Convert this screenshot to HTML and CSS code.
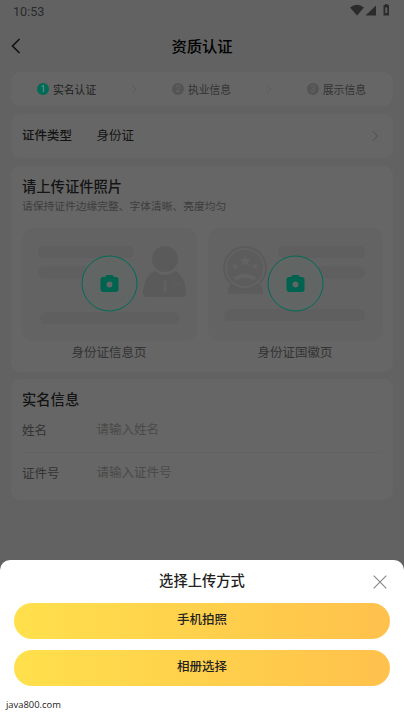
FILE: index.html
```html
<!DOCTYPE html>
<html lang="zh-CN">
<head>
<meta charset="utf-8">
<title>资质认证</title>
<link rel="stylesheet" href="styles.css">
</head>
<body>
<div class="screen">
  <header class="status">
    <span>10:53</span>
    <svg width="42" height="14" viewBox="0 0 42 14" fill="#2b2b2b"><path d="M0 3.500Q7-1.800 14 3.500L7 11.500Z"/><path d="M26 1.500V11.500H15.500Z"/><path fill-rule="evenodd" d="M34 1h1V0h2.500v1h1.500V11.500H33.500V1ZM35.300 3.500v5.500h1.900V3.500Z"/></svg>
  </header>
  <nav class="navbar">
    <svg class="back" width="12" height="18" viewBox="0 0 12 18"><path d="M8.500 2L1.500 9l7 7" fill="none" stroke="#111" stroke-width="1.600"/></svg>
    <h1>资质认证</h1>
  </nav>
  <main>
    <section class="card steps">
      <div class="step active"><i>1</i><span>实名认证</span></div>
      <svg class="sep" width="6" height="10" viewBox="0 0 6 10"><path d="M1 1l4 4-4 4"/></svg>
      <div class="step"><i>2</i><span>执业信息</span></div>
      <svg class="sep" width="6" height="10" viewBox="0 0 6 10"><path d="M1 1l4 4-4 4"/></svg>
      <div class="step"><i>3</i><span>展示信息</span></div>
    </section>
    <section class="card type">
      <b>证件类型</b><span>身份证</span>
      <svg width="7" height="10" viewBox="0 0 7 10"><path d="M1 .5L5.500 5 1 9.500" fill="none" stroke="#4a4a4a"/></svg>
    </section>
    <section class="card photos">
      <h2>请上传证件照片</h2>
      <p>请保持证件边缘完整、字体清晰、亮度均匀</p>
      <div class="tiles">
        <figure>
          <svg width="175" height="113" viewBox="0 0 175 113">
            <rect width="175" height="113" rx="12" fill="#636363"/>
            <g fill="#5f5f5f"><rect x="16" y="18" width="96" height="12" rx="6"/><rect x="16" y="38.500" width="80" height="12" rx="6"/><rect x="18" y="84" width="140" height="12" rx="6"/></g>
            <g fill="#5a5a5a"><circle cx="143" cy="31" r="13"/><path d="M133 43Q143 51 153 43Q164 49 164 66Q164 69 161 69H125Q121 69 121 65Q122 48 133 43Z"/></g>
            <path d="M142 52h2.500l-.5 3 1 7-2 3-2-3 1-7Z" fill="#606060"/><path d="M150 59l8-4" stroke="#606060"/>
            <circle cx="87.500" cy="55.500" r="27.500" fill="#616664" stroke="#006b58"/>
            <path fill="#006350" fill-rule="evenodd" d="M83 49l1-1.500q.5-.5 1-.5h5q.5 0 1 .5l1 1.500h2q2.500 0 2.500 2.500V61q0 3-3 3h-12q-3 0-3-3v-9.500q0-2.500 2.500-2.500ZM87.500 53.500a3 3 0 1 0 0 6 3 3 0 1 0 0-6Z"/>
          </svg>
          <figcaption>身份证信息页</figcaption>
        </figure>
        <figure>
          <svg width="175" height="113" viewBox="0 0 175 113">
            <rect width="175" height="113" rx="12" fill="#636363"/>
            <g fill="#5f5f5f"><rect x="70" y="18" width="87" height="12" rx="6"/><rect x="70" y="38.500" width="87" height="12" rx="6"/><rect x="16" y="81" width="141" height="12" rx="6"/></g>
            <path d="M22 57h31l2 5v4H20v-4Z" fill="#5c5c5c"/>
            <circle cx="37" cy="40" r="21" fill="#626262" stroke="#5b5b5b" stroke-width="2"/><circle cx="37" cy="40" r="18" fill="#5c5c5c"/>
            <path d="M37 27l1.700 4h4.300l-3.500 2.700 1.300 4.200-3.800-2.600-3.800 2.600 1.300-4.200-3.500-2.700h4.300ZM27 35l1 2.200h2.500l-2 1.700.8 2.500-2.300-1.500-2.300 1.500.8-2.500-2-1.700h2.500ZM47 35l1 2.200h2.500l-2 1.700.8 2.500-2.300-1.500-2.300 1.500.8-2.500-2-1.700h2.500ZM25 50q12-9 24 0l-3 2q-9-4-18 0Z" fill="#636363"/>
            <circle cx="87.500" cy="55.500" r="27.500" fill="#616664" stroke="#006b58"/>
            <path fill="#006350" fill-rule="evenodd" d="M83 49l1-1.500q.5-.5 1-.5h5q.5 0 1 .5l1 1.500h2q2.500 0 2.500 2.500V61q0 3-3 3h-12q-3 0-3-3v-9.500q0-2.500 2.500-2.500ZM87.500 53.500a3 3 0 1 0 0 6 3 3 0 1 0 0-6Z"/>
          </svg>
          <figcaption>身份证国徽页</figcaption>
        </figure>
      </div>
    </section>
    <section class="card info">
      <h2>实名信息</h2>
      <div class="field first"><label>姓名</label><span>请输入姓名</span></div>
      <div class="field"><label>证件号</label><span>请输入证件号</span></div>
    </section>
  </main>
  <section class="sheet">
    <div class="sheet-head">
      <h2>选择上传方式</h2>
      <svg class="close" width="14" height="14" viewBox="0 0 14 14"><path d="M.7.7l12.600 12.600M13.300.7L.7 13.300" stroke="#858585" stroke-width="1.100"/></svg>
    </div>
    <button>手机拍照</button>
    <button>相册选择</button>
    <footer>java800.com</footer>
  </section>
</div>
</body>
</html>
```
FILE: styles.css
```css
* { box-sizing: border-box; }
body, h1, h2, p, figure { margin: 0; }
body {
  background: #626262;
  color: #141414;
  font: 12.5px/18px "Noto Sans CJK SC", sans-serif;
}
svg { display: block; flex: none; }
.screen { height: 718px; display: flex; flex-direction: column; overflow: hidden; }
.status {
  height: 24px;
  padding: 0 13px;
  display: flex;
  align-items: center;
  justify-content: space-between;
  font: 12.6px/24px Roboto, sans-serif;
  color: #2b2b2b;
}
.status svg { margin: -2px -1px 0 0; }
.navbar {
  height: 48px;
  padding: 0 11px;
  display: grid;
  grid-template-columns: 12px 1fr 12px;
  align-items: center;
  text-align: center;
}
.navbar svg { margin-top: -4px; }
.navbar h1 { font-size: 15.3px; line-height: 22px; font-weight: 500; color: #000; margin-top: -6px; }
main { flex: 1; padding: 0 11px; }
.card { background: #666; border-radius: 9px; padding: 0 11px; }
.steps { height: 34px; display: flex; align-items: center; justify-content: space-between; padding: 0 27px 0 26px; }
.step { display: flex; align-items: center; gap: 4px; font-size: 10.8px; color: #333; }
.step i {
  width: 12px; height: 12px;
  border-radius: 50%;
  background: #545454;
  color: #666;
  font: 9px/12px Roboto, sans-serif;
  text-align: center;
}
.step.active { color: #202020; }
.step.active i { background: #006a57; color: #719a90; }
.sep path { fill: none; stroke: #5a5a5a; }
.type { height: 44px; margin-top: 8px; display: flex; align-items: center; }
.type b { width: 74.5px; font-weight: 500; }
.type b, .type span { margin-top: -3px; }
.type svg { margin: 0 3px 0 auto; }
.photos { height: 206px; margin-top: 8px; padding-top: 9px; }
h2 { font-size: 14.3px; line-height: 22px; font-weight: 500; }
.photos p { font-size: 10.75px; line-height: 16px; color: #3d3d3d; margin-top: 1px; }
.tiles { display: flex; gap: 11px; margin-top: 14px; width: 361px; }
figcaption { text-align: center; color: #333; line-height: 18px; margin: 2px 1px 0 0; }
.info { height: 121px; margin-top: 7px; padding-top: 9px; }
.field { height: 43px; display: flex; align-items: center; color: #333; }
.field.first { padding-bottom: 3px; border-bottom: 1px solid #626262; }
.field label { width: 74.5px; }
.field:not(.first) { padding-bottom: 3px; }
.field span { color: #4a4a4a; margin-top: -2px; }
.sheet {
  height: 158px;
  padding: 0 14px;
  background: #fff;
  border-radius: 10px 10px 0 0;
}
.sheet-head { height: 43px; display: grid; grid-template-columns: 17px 1fr 17px; align-items: center; text-align: center; }
.sheet-head h2 { grid-column: 2; margin-top: -3px; color: #222; }
.sheet button {
  display: block;
  width: 376px;
  height: 36px;
  margin: 0 0 11px;
  padding: 0 0 4px;
  border: 0;
  border-radius: 18px;
  background: linear-gradient(90deg, #ffe04c, #ffc14c);
  color: #222;
  font: 500 12.5px/18px "Noto Sans CJK SC", sans-serif;
}
footer { margin: 1px -8px 0; font: 9.4px/16px "Open Sans", sans-serif; color: #222; }
```
